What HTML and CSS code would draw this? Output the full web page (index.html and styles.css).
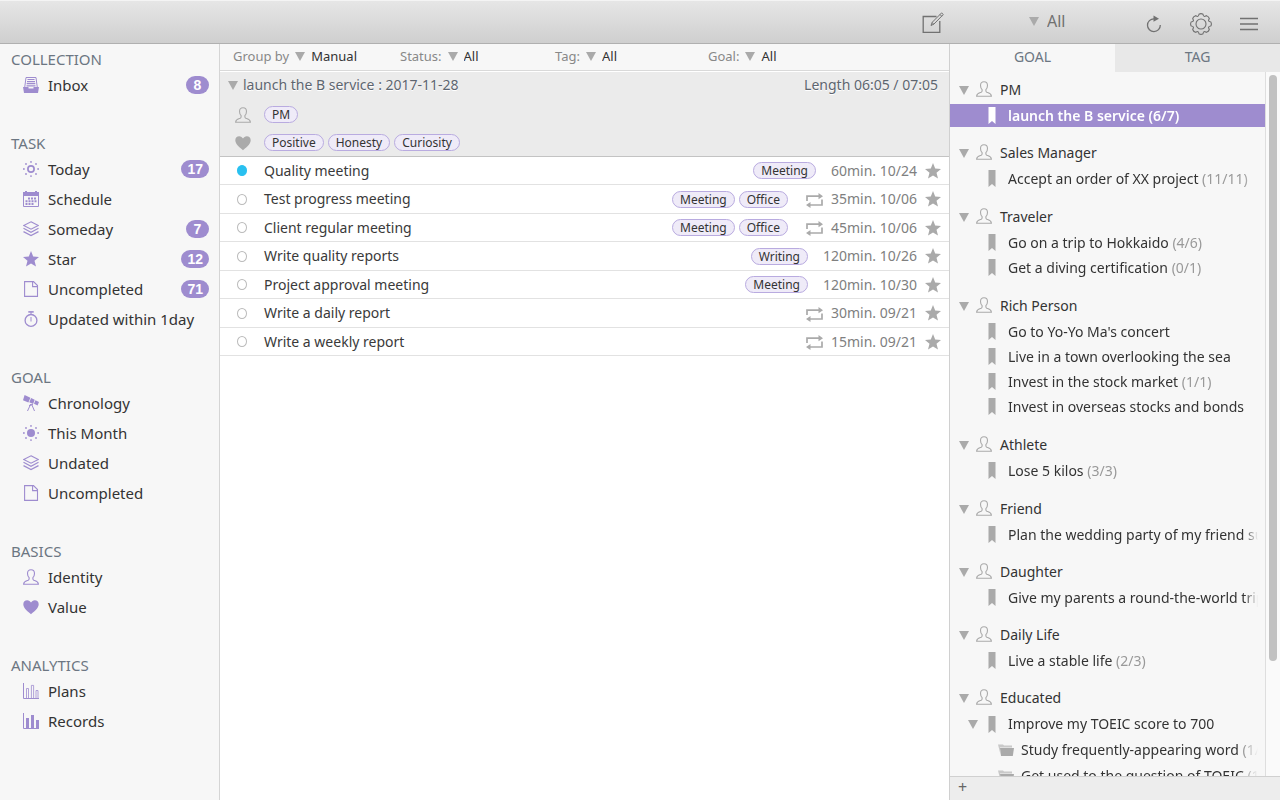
FILE: index.html
```html
<!DOCTYPE html>
<html lang="en">
<head>
<meta charset="utf-8">
<title>Tasks</title>
<link rel="stylesheet" href="styles.css">
</head>
<body>
<svg class="sprite" aria-hidden="true">
  <symbol id="person" viewBox="0 0 16 16"><path fill="none" stroke="currentColor" stroke-width="1.100" d="M8 .8C5.600.8 4.500 2.400 4.500 4.500c0 1.700.7 3.200 1.600 4.200v1.400c0 .7-.4 1-1.200 1.300C2.600 12.200.7 12.600.6 15.300h14.800c-.1-2.700-2-3.100-4.300-3.900-.8-.3-1.200-.6-1.200-1.300V8.700c.9-1 1.600-2.500 1.600-4.200C11.500 2.400 10.400.8 8 .8z"/></symbol>
  <symbol id="heart" viewBox="0 0 16 16"><path fill="currentColor" d="M8 15.300C5.500 12.700.3 9.700.3 5.200.3 2.800 2 1.200 4.200 1.200c1.700 0 3.100.9 3.800 2.400.7-1.500 2.100-2.400 3.800-2.400 2.200 0 3.900 1.600 3.900 4C15.700 9.700 10.500 12.700 8 15.300z"/></symbol>
  <symbol id="star" viewBox="0 0 16 16"><path fill="currentColor" d="M8 0l2.200 5.500 5.800.4-4.500 3.800L13 15.600 8 12.400l-5 3.200 1.500-5.900L0 5.900l5.800-.4z"/></symbol>
  <symbol id="inbox" viewBox="0 0 16 16"><path fill="currentColor" d="M0 10h5.500v1.600h5V10H16l-1 6H1z"/><path fill="none" stroke="currentColor" d="M1.700 10.500L3 .5h10l1.300 10"/><path fill="none" stroke="currentColor" stroke-width="1.200" d="M4.500 2.500h7M4 4.600h8M3.700 6.700h8.600M3.500 8.800h9"/></symbol>
  <symbol id="sunray" viewBox="0 0 16 16"><g fill="currentColor"><circle cx="8" cy=".9" r=".9"/><circle cx="8" cy="15.100" r=".9"/><circle cx=".9" cy="8" r=".9"/><circle cx="15.100" cy="8" r=".9"/><circle cx="3" cy="3" r=".9"/><circle cx="13" cy="3" r=".9"/><circle cx="3" cy="13" r=".9"/><circle cx="13" cy="13" r=".9"/></g></symbol>
  <symbol id="today" viewBox="0 0 16 16"><use href="#sunray"/><circle cx="8" cy="8" r="3.100" fill="none" stroke="currentColor" stroke-width="1.700"/></symbol>
  <symbol id="month" viewBox="0 0 16 16"><use href="#sunray"/><circle cx="8" cy="8" r="4" fill="currentColor"/></symbol>
  <symbol id="calendar" viewBox="0 0 16 16"><path fill="currentColor" d="M0 1h2V0h2v1h8V0h2v1h2v4H0z"/><path fill="none" stroke="currentColor" d="M.5 4v11.500h15V4"/><path stroke="currentColor" stroke-width="2" stroke-dasharray="2 1" d="M5 7.500h8.500M2.500 10.200h11M2.500 13h8"/></symbol>
  <symbol id="layers" viewBox="0 0 16 16"><path fill="none" stroke="currentColor" stroke-width="1.200" d="M8 .8l7.300 3.700L8 8.200.7 4.500zM.5 7.300L8 11.200l7.500-3.900M.5 10.600L8 14.600l7.500-4"/></symbol>
  <symbol id="page" viewBox="0 0 16 16"><path fill="none" stroke="currentColor" stroke-width="1.100" d="M1.600.6h8.900l4 4v10.800H1.600zM9.600.6v5h5"/></symbol>
  <symbol id="watch" viewBox="0 0 16 16"><g fill="none" stroke="currentColor"><circle cx="8" cy="9.400" r="5.900" stroke-width="1.300"/><path d="M8 6v4.500M8 1v2.500"/><path stroke-width="1.600" d="M5.300.9h5.400"/></g></symbol>
  <symbol id="telescope" viewBox="0 0 16 16"><path fill="currentColor" d="M1.600 0l5.800 2.700-2 4.900L0 5.200zM8.100 3.100l3.600 1.600-1.600 4.200-3.800-1.700zM12.400 5.300l3.600 1.600-1.400 3.500-3.600-1.600z"/><path fill="none" stroke="currentColor" d="M7.800 9L4.500 16M8.500 9l3 7M6 10.500l4-1"/></symbol>
  <symbol id="plans" viewBox="0 0 16 16"><path fill="none" stroke="currentColor" d="M.5 0v15.500H16"/><path fill="none" stroke="currentColor" stroke-width=".8" d="M3.500 15V5.500h2V15M8.400 15V2.400h2.200V15M13 15V7.500h2V15"/></symbol>
  <symbol id="records" viewBox="0 0 16 16"><path fill="none" stroke="currentColor" d="M.5 0v15.500H16"/><path fill="currentColor" d="M3 5h3v10H3zM8 2h3v13H8zM13 7h3v8h-3z"/></symbol>
  <symbol id="bookmark" viewBox="0 0 8 17"><path fill="currentColor" d="M.5 0h7v17L4 14 .5 17z"/></symbol>
  <symbol id="folder" viewBox="0 0 16 12"><path fill="currentColor" opacity=".6" d="M0 .5h5l1 1h8v2H2l.5 7z"/><path fill="currentColor" d="M2 4h14l-1.200 8H3z"/></symbol>
  <symbol id="repeat" viewBox="0 0 17 15"><g fill="none" stroke="currentColor" stroke-width="1.700"><path d="M1 8V3.200h12.500M16 6.500V12H3.500"/></g><path fill="currentColor" d="M12.500 0L17 3.200l-4.500 3zM4.500 9L0 12l4.500 3z"/></symbol>
  <symbol id="tri" viewBox="0 0 10 9"><path fill="currentColor" d="M0 0h10L5 9z"/></symbol>
</svg>

<header class="toolbar">
  <div class="toolbar-main"><button class="tool" aria-label="New task"><svg width="22" height="22" viewBox="0 0 22 22" fill="none" stroke="currentColor"><path stroke-width="1.300" d="M14.500 4.500H1.200v15.800h16.600V9"/><path d="M9 13.500l1.200-3.200L19.600.9l1.700 1.600-9.300 9.500zM18 2.500l1.700 1.700M10 10.500l1.800 1.700"/></svg></button></div>
  <div class="toolbar-side">
    <label class="scope"><svg class="tri"><use href="#tri"/></svg><select aria-label="Scope"><option>All</option></select></label>
    <div class="tools">
      <button class="tool" aria-label="Refresh"><svg width="16" height="18" viewBox="0 0 16 18"><path fill="none" stroke="currentColor" stroke-width="1.300" d="M14.300 10A6.400 6.400 0 1 1 8 3.800"/><path fill="currentColor" d="M7.500.5l5.500 3.300-5.500 3z"/></svg></button>
      <button class="tool" aria-label="Settings"><svg width="22" height="22" viewBox="-11 -11 22 22" fill="none" stroke="currentColor" stroke-width="1.100"><circle r="5"/><path d="M-2-9.800Q0-11 2-9.800Q2.300-7.400 3.500-7.500L5.500-8.300Q7.600-7.700 8.300-5.500L7.500-3.500Q7.400-2.300 9.800-2Q11 0 9.800 2Q7.400 2.300 7.500 3.500L8.300 5.500Q7.700 7.600 5.500 8.300L3.500 7.500Q2.300 7.400 2 9.800Q0 11-2 9.800Q-2.300 7.400-3.500 7.500L-5.500 8.300Q-7.600 7.700-8.300 5.500L-7.500 3.500Q-7.400 2.300-9.800 2Q-11 0-9.800-2Q-7.400-2.300-7.500-3.500L-8.300-5.500Q-7.700-7.600-5.500-8.300L-3.500-7.500Q-2.300-7.400-2-9.800z"/></svg></button>
      <button class="tool" aria-label="Menu"><svg width="18" height="14" viewBox="0 0 18 14"><path stroke="currentColor" stroke-width="1.600" d="M0 1.500h18M0 7h18M0 12.500h18"/></svg></button>
    </div>
  </div>
</header>

<div class="columns">
  <nav class="sidebar">
    <section><h2>COLLECTION</h2>
      <a href="#"><svg><use href="#inbox"/></svg>Inbox<b class="count">8</b></a>
    </section>
    <section><h2>TASK</h2>
      <a href="#"><svg><use href="#today"/></svg>Today<b class="count">17</b></a>
      <a href="#"><svg><use href="#calendar"/></svg>Schedule</a>
      <a href="#"><svg><use href="#layers"/></svg>Someday<b class="count">7</b></a>
      <a href="#"><svg><use href="#star"/></svg>Star<b class="count">12</b></a>
      <a href="#"><svg><use href="#page"/></svg>Uncompleted<b class="count">71</b></a>
      <a href="#"><svg><use href="#watch"/></svg>Updated within 1day</a>
    </section>
    <section><h2>GOAL</h2>
      <a href="#"><svg><use href="#telescope"/></svg>Chronology</a>
      <a href="#"><svg><use href="#month"/></svg>This Month</a>
      <a href="#"><svg><use href="#layers"/></svg>Undated</a>
      <a href="#"><svg><use href="#page"/></svg>Uncompleted</a>
    </section>
    <section><h2>BASICS</h2>
      <a href="#"><svg><use href="#person"/></svg>Identity</a>
      <a href="#"><svg><use href="#heart"/></svg>Value</a>
    </section>
    <section><h2>ANALYTICS</h2>
      <a href="#"><svg><use href="#plans"/></svg>Plans</a>
      <a href="#"><svg><use href="#records"/></svg>Records</a>
    </section>
  </nav>

  <main class="main">
    <div class="filters">
      <label>Group by<svg class="tri"><use href="#tri"/></svg><select><option>Manual</option></select></label>
      <label>Status:<svg class="tri"><use href="#tri"/></svg><select><option>All</option></select></label>
      <label>Tag:<svg class="tri"><use href="#tri"/></svg><select><option>All</option></select></label>
      <label>Goal:<svg class="tri"><use href="#tri"/></svg><select><option>All</option></select></label>
    </div>
    <div class="group">
      <div class="group-title"><svg class="tri"><use href="#tri"/></svg><h1>launch the B service : 2017-11-28</h1><span>Length 06:05 / 07:05</span></div>
      <div class="group-row"><svg><use href="#person"/></svg><span class="tag">PM</span></div>
      <div class="group-row"><svg><use href="#heart"/></svg><span class="tag">Positive</span><span class="tag">Honesty</span><span class="tag">Curiosity</span></div>
    </div>
    <ul class="tasks">
      <li><input type="checkbox" id="t1" checked><label for="t1">Quality meeting</label><span class="tag">Meeting</span><span class="when">60min. 10/24</span><button aria-label="Star"><svg><use href="#star"/></svg></button></li>
      <li><input type="checkbox" id="t2"><label for="t2">Test progress meeting</label><span class="tag">Meeting</span><span class="tag">Office</span><svg class="repeat"><use href="#repeat"/></svg><span class="when">35min. 10/06</span><button aria-label="Star"><svg><use href="#star"/></svg></button></li>
      <li><input type="checkbox" id="t3"><label for="t3">Client regular meeting</label><span class="tag">Meeting</span><span class="tag">Office</span><svg class="repeat"><use href="#repeat"/></svg><span class="when">45min. 10/06</span><button aria-label="Star"><svg><use href="#star"/></svg></button></li>
      <li><input type="checkbox" id="t4"><label for="t4">Write quality reports</label><span class="tag">Writing</span><span class="when">120min. 10/26</span><button aria-label="Star"><svg><use href="#star"/></svg></button></li>
      <li><input type="checkbox" id="t5"><label for="t5">Project approval meeting</label><span class="tag">Meeting</span><span class="when">120min. 10/30</span><button aria-label="Star"><svg><use href="#star"/></svg></button></li>
      <li><input type="checkbox" id="t6"><label for="t6">Write a daily report</label><svg class="repeat"><use href="#repeat"/></svg><span class="when">30min. 09/21</span><button aria-label="Star"><svg><use href="#star"/></svg></button></li>
      <li><input type="checkbox" id="t7"><label for="t7">Write a weekly report</label><svg class="repeat"><use href="#repeat"/></svg><span class="when">15min. 09/21</span><button aria-label="Star"><svg><use href="#star"/></svg></button></li>
    </ul>
  </main>

  <aside class="panel">
    <div class="tabs"><button class="active">GOAL</button><button>TAG</button></div>
    <div class="scroller">
      <div class="tree">
        <section><h3><svg class="tri"><use href="#tri"/></svg><svg class="who"><use href="#person"/></svg>PM</h3>
          <a href="#" class="selected"><svg class="mark"><use href="#bookmark"/></svg><span>launch the B service (6/7)</span></a></section>
        <section><h3><svg class="tri"><use href="#tri"/></svg><svg class="who"><use href="#person"/></svg>Sales Manager</h3>
          <a href="#"><svg class="mark"><use href="#bookmark"/></svg><span>Accept an order of XX project <i>(11/11)</i></span></a></section>
        <section><h3><svg class="tri"><use href="#tri"/></svg><svg class="who"><use href="#person"/></svg>Traveler</h3>
          <a href="#"><svg class="mark"><use href="#bookmark"/></svg><span>Go on a trip to Hokkaido <i>(4/6)</i></span></a>
          <a href="#"><svg class="mark"><use href="#bookmark"/></svg><span>Get a diving certification <i>(0/1)</i></span></a></section>
        <section><h3><svg class="tri"><use href="#tri"/></svg><svg class="who"><use href="#person"/></svg>Rich Person</h3>
          <a href="#"><svg class="mark"><use href="#bookmark"/></svg><span>Go to Yo-Yo Ma's concert</span></a>
          <a href="#"><svg class="mark"><use href="#bookmark"/></svg><span>Live in a town overlooking the sea</span></a>
          <a href="#"><svg class="mark"><use href="#bookmark"/></svg><span>Invest in the stock market <i>(1/1)</i></span></a>
          <a href="#"><svg class="mark"><use href="#bookmark"/></svg><span>Invest in overseas stocks and bonds</span></a></section>
        <section><h3><svg class="tri"><use href="#tri"/></svg><svg class="who"><use href="#person"/></svg>Athlete</h3>
          <a href="#"><svg class="mark"><use href="#bookmark"/></svg><span>Lose 5 kilos <i>(3/3)</i></span></a></section>
        <section><h3><svg class="tri"><use href="#tri"/></svg><svg class="who"><use href="#person"/></svg>Friend</h3>
          <a href="#"><svg class="mark"><use href="#bookmark"/></svg><span>Plan the wedding party of my friend su</span></a></section>
        <section><h3><svg class="tri"><use href="#tri"/></svg><svg class="who"><use href="#person"/></svg>Daughter</h3>
          <a href="#"><svg class="mark"><use href="#bookmark"/></svg><span>Give my parents a round-the-world trip</span></a></section>
        <section><h3><svg class="tri"><use href="#tri"/></svg><svg class="who"><use href="#person"/></svg>Daily Life</h3>
          <a href="#"><svg class="mark"><use href="#bookmark"/></svg><span>Live a stable life <i>(2/3)</i></span></a></section>
        <section><h3><svg class="tri"><use href="#tri"/></svg><svg class="who"><use href="#person"/></svg>Educated</h3>
          <a href="#" class="open"><svg class="tri"><use href="#tri"/></svg><svg class="mark"><use href="#bookmark"/></svg><span>Improve my TOEIC score to 700</span></a>
          <a href="#" class="nested"><svg class="folder"><use href="#folder"/></svg><span>Study frequently-appearing word <i>(1/</i></span></a>
          <a href="#" class="nested"><svg class="folder"><use href="#folder"/></svg><span>Get used to the question of TOEIC <i>(1</i></span></a></section>
      </div>
      <div class="track"><div class="thumb"></div></div>
    </div>
    <footer><button aria-label="Add goal">+</button></footer>
  </aside>
</div>
</body>
</html>
```
FILE: styles.css
```css
* { box-sizing: border-box; }
body {
  margin: 0;
  height: 100vh;
  display: flex;
  flex-direction: column;
  overflow: hidden;
  font: 14px/20px "Noto Sans", "Open Sans", sans-serif;
  color: #333;
  background: #fff;
}
h1, h2, h3 { margin: 0; font-weight: 400; }
a { color: inherit; text-decoration: none; }
i { font-style: normal; color: #999; }
svg { flex: none; }
button, select {
  margin: 0;
  padding: 0;
  border: 0;
  background: none;
  font: inherit;
  color: inherit;
  appearance: none;
}
.sprite { position: absolute; width: 0; height: 0; }
.tri { width: 10px; height: 9px; color: #aaa; }

.toolbar {
  flex: none;
  display: flex;
  height: 44px;
  border-top: 1px solid #f4f4f4;
  border-bottom: 1px solid #b0b0b0;
  background: linear-gradient(#e6e6e6, #cfcfcf);
  color: #717171;
}
.toolbar-main { flex: 1; display: flex; justify-content: flex-end; align-items: center; padding: 2px 6px 0 0; }
.toolbar-side { width: 330px; display: flex; justify-content: space-between; align-items: center; padding: 0 22px 0 79px; }
.tool { display: flex; }
.tools { display: flex; align-items: center; gap: 28px; padding-top: 3px; }
.scope { display: flex; align-items: center; gap: 8px; padding-bottom: 2px; font-size: 16px; }

.columns { flex: 1; min-height: 0; display: flex; }

.sidebar {
  width: 220px;
  flex: none;
  display: flex;
  flex-direction: column;
  gap: 32px;
  padding: 4px 10px 0 11px;
  border-right: 1px solid #d5d5d5;
  background: #f7f7f7;
  font-size: 15px;
  overflow: hidden;
}
.sidebar h2 { font-size: 15px; line-height: 22px; color: #6c7682; }
.sidebar a { display: flex; align-items: center; gap: 9px; height: 30px; padding-left: 12px; }
.sidebar svg { width: 16px; height: 16px; color: #9e8ccf; }
.count {
  margin-left: auto;
  min-width: 23px;
  padding: 0 6px;
  border-radius: 9px;
  background: #9e8ccf;
  color: #fff;
  font: bold 14px/18px "Liberation Sans", sans-serif;
  text-align: center;
}

.main { flex: 1; min-width: 0; }
.filters {
  display: grid;
  grid-template-columns: 167fr 155fr 153fr 241fr;
  height: 27px;
  padding-left: 13px;
  align-items: center;
  border-bottom: 1px solid #d9d9d9;
  background: #f7f7f7;
  font-size: 13px;
  color: #888;
}
.filters label { display: flex; align-items: center; gap: 6px; padding-bottom: 2px; }
.filters select { color: #333; }
.group {
  margin-top: 1px;
  height: 85px;
  border-bottom: 1px solid #c3c3c3;
  background: #ebebeb;
}
.group-title {
  display: flex;
  align-items: center;
  gap: 5px;
  height: 28px;
  padding: 0 11px 2px 8px;
  color: #5d656f;
  text-shadow: 0 1px #fff;
}
.group-title h1 { flex: 1; font-size: 14px; }
.group-row { display: flex; align-items: center; gap: 4px; height: 28px; padding-left: 15px; }
.group-row svg { width: 16px; height: 16px; margin: 2px 9px 0 0; color: #aaa; }
.tag {
  padding: 0 7px;
  border: 1px solid #b9abe0;
  border-radius: 9px;
  background: #efebf8;
  font-size: 12px;
  line-height: 15px;
  color: #333;
}

.tasks { margin: 0; padding: 0; list-style: none; }
.tasks li { display: flex; align-items: center; height: 28px; padding: 0 8px 0 17px; border-bottom: 1px solid #e2e2e2; }
.tasks li:nth-child(even) { height: 29px; }
.tasks input {
  width: 10px;
  height: 11px;
  margin: 0 17px 0 0;
  border: 1px solid #bbb;
  border-radius: 50%;
  appearance: none;
}
.tasks input:checked { border-color: #29c0f0; background: #29c0f0; }
.tasks label { flex: 1; color: #3a3a3a; }
.tasks .tag + .tag { margin-left: 4px; }
.repeat { width: 17px; height: 15px; margin: 2px -7px 0 18px; color: #aaa; }
.when { margin-left: 15px; color: #808080; }
.tasks button { display: flex; margin-left: 8px; color: #aaa; }
.tasks button svg { width: 16px; height: 16px; }

.panel {
  width: 331px;
  flex: none;
  display: flex;
  flex-direction: column;
  border-left: 1px solid #d0d0d0;
  background: #f7f7f7;
}
.tabs { display: flex; }
.tabs button { flex: 1; height: 28px; padding-bottom: 2px; background: #e8e8e8; color: #6c7682; }
.tabs .active { background: none; }
.scroller { flex: 1; min-height: 0; display: flex; }
.tree { flex: 1; min-width: 0; overflow: hidden; padding-top: 5px; }
.tree section { margin-bottom: 13px; }
.tree section:nth-child(n+6) { margin-bottom: 12px; }
.tree h3 { display: flex; align-items: center; height: 26px; padding-left: 9px; font-size: 14px; }
.who { width: 16px; height: 16px; margin: 0 8px 2px 7px; color: #aaa; }
.tree a { display: flex; align-items: center; height: 25px; padding: 0 7px 0 38px; }
.tree a span {
  flex: 1;
  overflow: hidden;
  white-space: nowrap;
  mask-image: linear-gradient(to left, transparent, #000 14px);
}
.mark { width: 8px; height: 17px; margin-right: 12px; color: #aaa; }
.tree .selected { height: 23px; margin: 1px 0; background: #9e8ccf; color: #fff; font-weight: 600; }
.selected .mark { color: #fff; }
.tree .open { height: 26px; padding-left: 18px; }
.open .mark { margin-left: 10px; }
.tree .nested { height: 26px; padding-left: 48px; }
.folder { width: 16px; height: 12px; margin-right: 7px; color: #aaa; }
.track { width: 15px; padding: 3px; border-left: 1px solid #dedede; background: #fafafa; }
.thumb { width: 8px; height: 84%; border-radius: 4px; background: #c1c1c1; }
.panel footer { flex: none; height: 24px; padding-left: 8px; border-top: 1px solid #d0d0d0; background: #ededed; color: #666; }
.panel footer button { font-size: 16px; line-height: 20px; }
```
